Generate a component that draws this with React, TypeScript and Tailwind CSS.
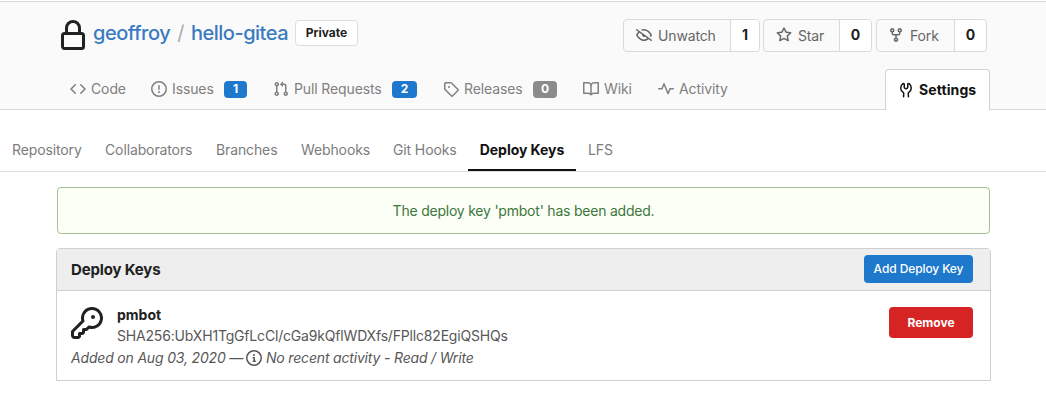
import type { ReactNode } from "react";

const paths = {
  lock: "M4 4v2h-.25A1.75 1.75 0 002 7.75v5.5c0 .966.784 1.75 1.75 1.75h8.5A1.75 1.75 0 0014 13.25v-5.5A1.75 1.75 0 0012.25 6H12V4a4 4 0 10-8 0zm6.5 2V4a2.5 2.5 0 10-5 0v2h5zM12 7.5h.25a.25.25 0 01.25.25v5.5a.25.25 0 01-.25.25h-8.5a.25.25 0 01-.25-.25v-5.5a.25.25 0 01.25-.25H12z",
  code: "M4.72 3.22a.75.75 0 011.06 1.06L2.06 8l3.72 3.72a.75.75 0 11-1.06 1.06L.47 8.53a.75.75 0 010-1.06l4.25-4.25zm6.56 0a.75.75 0 10-1.06 1.06L13.94 8l-3.72 3.72a.75.75 0 101.06 1.06l4.25-4.25a.75.75 0 000-1.06l-4.25-4.25z",
  issue: "M8 1.5a6.5 6.5 0 100 13 6.5 6.5 0 000-13zM0 8a8 8 0 1116 0A8 8 0 010 8zm9 3a1 1 0 11-2 0 1 1 0 012 0zm-.25-6.25a.75.75 0 00-1.5 0v3.5a.75.75 0 001.5 0v-3.5z",
  pull: "M7.177 3.073L9.573.677A.25.25 0 0110 .854v4.792a.25.25 0 01-.427.177L7.177 3.427a.25.25 0 010-.354zM3.75 2.5a.75.75 0 100 1.5.75.75 0 000-1.5zm-2.25.75a2.25 2.25 0 113 2.122v5.256a2.251 2.251 0 11-1.5 0V5.372A2.25 2.25 0 011.5 3.25zM11 2.5h-1V4h1a1 1 0 011 1v5.628a2.251 2.251 0 101.5 0V5A2.5 2.5 0 0011 2.5zm1 10.25a.75.75 0 111.5 0 .75.75 0 01-1.5 0zM3.75 12a.75.75 0 100 1.5.75.75 0 000-1.5z",
  tag: "M2.5 7.775V2.75a.25.25 0 01.25-.25h5.025a.25.25 0 01.177.073l6.25 6.25a.25.25 0 010 .354l-5.025 5.025a.25.25 0 01-.354 0l-6.25-6.25a.25.25 0 01-.073-.177zm-1.5 0V2.75C1 1.784 1.784 1 2.75 1h5.025c.464 0 .91.184 1.238.513l6.25 6.25a1.75 1.75 0 010 2.474l-5.026 5.026a1.75 1.75 0 01-2.474 0l-6.25-6.25A1.75 1.75 0 011 7.775zM6 5a1 1 0 100 2 1 1 0 000-2z",
  book: "M0 1.75A.75.75 0 01.75 1h4.253c1.227 0 2.317.59 3 1.501A3.744 3.744 0 0111.006 1h4.245a.75.75 0 01.75.75v10.5a.75.75 0 01-.75.75h-4.507a2.25 2.25 0 00-1.591.659l-.622.621a.75.75 0 01-1.06 0l-.622-.621A2.25 2.25 0 005.258 13H.75a.75.75 0 01-.75-.75V1.75zm8.755 3a2.25 2.25 0 012.25-2.25H14.5v9h-3.757c-.71 0-1.4.201-1.992.572l.004-7.322zm-1.504 7.324l.004-5.073-.002-2.253A2.25 2.25 0 005.003 2.5H1.5v9h3.757a3.75 3.75 0 011.994.574z",
  pulse: "M6 2a.75.75 0 01.696.471L10 10.731l1.304-3.26A.75.75 0 0112 7h3.25a.75.75 0 010 1.5h-2.742l-1.812 4.528a.75.75 0 01-1.392 0L6 4.77 4.696 8.03A.75.75 0 014 8.5H.75a.75.75 0 010-1.5h2.742l1.812-4.529A.75.75 0 016 2z",
  tools: "M5.433 2.304A4.494 4.494 0 003.5 6c0 1.598.832 3.002 2.09 3.802.518.328.929.923.902 1.64v.008l-.164 3.337a.75.75 0 11-1.498-.073l.163-3.33c.002-.085-.05-.216-.207-.316A5.996 5.996 0 012 6a5.994 5.994 0 012.567-4.92 1.482 1.482 0 011.673-.04c.462.296.76.827.76 1.423v2.82c0 .082.041.16.11.206l.75.51a.25.25 0 00.28 0l.75-.51A.25.25 0 009 5.282V2.463c0-.596.298-1.127.76-1.423a1.482 1.482 0 011.673.04A5.994 5.994 0 0114 6a5.996 5.996 0 01-2.786 5.068c-.157.1-.209.23-.207.315l.163 3.33a.75.75 0 11-1.498.074l-.164-3.345c-.027-.717.384-1.312.902-1.64A4.496 4.496 0 0012.5 6a4.494 4.494 0 00-1.933-3.696c-.024.017-.067.067-.067.16v2.818a1.75 1.75 0 01-.767 1.448l-.75.51a1.75 1.75 0 01-1.966 0l-.75-.51A1.75 1.75 0 015.5 5.282V2.463c0-.092-.043-.142-.067-.159z",
  eyeClosed: "M.143 2.31a.75.75 0 011.047-.167l14.5 10.5a.75.75 0 11-.88 1.214l-2.248-1.628C11.346 13.19 9.792 14 8 14c-1.981 0-3.67-.992-4.933-2.078C1.797 10.832.88 9.577.43 8.9a1.618 1.618 0 010-1.797c.353-.533.995-1.42 1.868-2.305L.31 3.357A.75.75 0 01.143 2.31zm3.386 3.378a14.21 14.21 0 00-1.85 2.244.12.12 0 00-.022.068c0 .021.006.045.022.068.412.621 1.242 1.75 2.366 2.717C5.175 11.758 6.527 12.5 8 12.5c1.195 0 2.31-.488 3.29-1.191L9.063 9.695A2 2 0 016.058 7.52l-2.53-1.832zM8 3.5c-.516 0-1.017.09-1.499.251a.75.75 0 11-.473-1.423A6.23 6.23 0 018 2c1.981 0 3.67.992 4.933 2.078 1.27 1.091 2.187 2.345 2.637 3.023a1.62 1.62 0 010 1.798c-.11.166-.248.365-.41.587a.75.75 0 11-1.21-.887c.148-.201.272-.382.371-.53a.119.119 0 000-.137c-.412-.621-1.242-1.75-2.366-2.717C10.825 4.242 9.473 3.5 8 3.5z",
  star: "M8 .25a.75.75 0 01.673.418l1.882 3.815 4.21.612a.75.75 0 01.416 1.279l-3.046 2.97.719 4.192a.75.75 0 01-1.088.791L8 12.347l-3.766 1.98a.75.75 0 01-1.088-.79l.72-4.194L.818 6.374a.75.75 0 01.416-1.28l4.21-.611L7.327.668A.75.75 0 018 .25zm0 2.445L6.615 5.5a.75.75 0 01-.564.41l-3.097.45 2.24 2.184a.75.75 0 01.216.664l-.528 3.084 2.769-1.456a.75.75 0 01.698 0l2.77 1.456-.53-3.084a.75.75 0 01.216-.664l2.24-2.183-3.096-.45a.75.75 0 01-.564-.41L8 2.694v.001z",
  fork: "M5 3.25a.75.75 0 11-1.5 0 .75.75 0 011.5 0zm0 2.122a2.25 2.25 0 10-1.5 0v.878A2.25 2.25 0 005.75 8.5h1.5v2.128a2.251 2.251 0 101.5 0V8.5h1.5a2.25 2.25 0 002.25-2.25v-.878a2.25 2.25 0 10-1.5 0v.878a.75.75 0 01-.75.75h-4.5A.75.75 0 015 6.25v-.878zm3.75 7.378a.75.75 0 11-1.5 0 .75.75 0 011.5 0zm3-8.75a.75.75 0 100-1.5.75.75 0 000 1.5z",
  key: "M6.5 5.5a4 4 0 112.731 3.795.75.75 0 00-.768.18L7.44 10.5H6.25a.75.75 0 00-.75.75v1.19l-.06.06H4.25a.75.75 0 00-.75.75v1.19l-.06.06H1.75a.25.25 0 01-.25-.25v-1.69l5.024-5.023a.75.75 0 00.181-.768A3.995 3.995 0 016.5 5.5zm4-5.5a5.5 5.5 0 00-5.348 6.788L.22 11.72a.75.75 0 00-.22.53v2C0 15.216.784 16 1.75 16h2a.75.75 0 00.53-.22l.5-.5a.75.75 0 00.22-.53V14h.75a.75.75 0 00.53-.22l.5-.5a.75.75 0 00.22-.53V12h.75a.75.75 0 00.53-.22l.932-.932A5.5 5.5 0 1010.5 0zm.5 6a1 1 0 100-2 1 1 0 000 2z",
  info: "M8 1.5a6.5 6.5 0 100 13 6.5 6.5 0 000-13zM0 8a8 8 0 1116 0A8 8 0 010 8zm6.5-.25A.75.75 0 017.25 7h1a.75.75 0 01.75.75v2.75h.25a.75.75 0 010 1.5h-2a.75.75 0 010-1.5h.25v-2h-.25a.75.75 0 01-.75-.75zM8 6a1 1 0 100-2 1 1 0 000 2z",
};

function Icon({ name, className = "size-4" }: { name: keyof typeof paths; className?: string }) {
  return (
    <svg viewBox="0 0 16 16" fill="currentColor" fillRule="evenodd" className={`shrink-0 ${className}`} aria-hidden="true">
      <path d={paths[name]} />
    </svg>
  );
}

function CountButton({ icon, label, count, left, right }: { icon: keyof typeof paths; label: string; count: number; left: string; right: string }) {
  return (
    <div className="flex h-[33px] rounded border border-[#d9d9da] text-sm">
      <button className={`flex items-center text-[#666] ${left}`}>
        <Icon name={icon} className="mb-0.5 size-4" />
        <span className="ml-1.5 tracking-[-0.15px]">{label}</span>
      </button>
      <span className={`flex items-center justify-center rounded-r border-l border-[#d9d9da] bg-white pb-px font-bold text-[#212121] ${right}`}>
        {count}
      </span>
    </div>
  );
}

function Tab({ icon, label, width, badge }: { icon: keyof typeof paths; label: string; width: string; badge?: ReactNode }) {
  return (
    <a className={`flex shrink-0 items-center tracking-[-0.12px] ${width}`}>
      <Icon name={icon} />
      <span className="ml-[5px]">{label}</span>
      {badge}
    </a>
  );
}

const badge = "ml-auto flex h-[17px] items-center justify-center rounded text-xs font-bold text-white";

export default function App() {
  return (
    <div className="h-[419px] overflow-hidden bg-white font-['Inter',sans-serif] text-sm text-[#212121]">
      <header className="mt-px flex h-[109px] flex-col border-y border-[#d8d9da] bg-[#fafafa]">
        <div className="flex h-[52px] items-start pl-[57px] pr-[59px] pt-[17px]">
          <Icon name="lock" className="mt-px size-8" />
          <div className="ml-1 flex h-7 items-center text-xl tracking-[-0.5px] text-[#3a7ac0]">
            <a className="w-[77px] font-medium">geoffroy</a>
            <span className="w-[21px] text-center text-[#aaa]">/</span>
            <a className="w-[98px] font-medium">hello-gitea</a>
          </div>
          <span className="ml-1.5 mt-px flex h-[26px] w-[63px] items-center justify-center rounded border border-[#dededf] bg-white text-xs font-bold">
            Private
          </span>
          <div className="ml-auto flex">
            <CountButton icon="eyeClosed" label="Unwatch" count={1} left="w-[106px] pl-3" right="w-[29px]" />
            <div className="w-[3px]" />
            <CountButton icon="star" label="Star" count={0} left="w-[75px] pl-3" right="w-8" />
            <div className="w-1" />
            <CountButton icon="fork" label="Fork" count={0} left="w-[77px] pl-[11px]" right="w-8" />
          </div>
        </div>
        <nav className="flex h-[55px] pl-[70px] pr-14 text-[#808080]">
          <div className="mt-[25px] flex h-5 items-center">
            <Tab icon="code" label="Code" width="mr-[25px] w-14" />
            <Tab icon="issue" label="Issues" width="mr-[26px] w-24" badge={<span className={`${badge} w-[23px] bg-[#1e78cc]`}>1</span>} />
            <Tab icon="pull" label="Pull Requests" width="mr-[26px] w-36" badge={<span className={`${badge} w-[25px] bg-[#1e78cc]`}>2</span>} />
            <Tab icon="tag" label="Releases" width="mr-[26px] w-[114px]" badge={<span className={`${badge} w-[24px] bg-[#8b8b8b]`}>0</span>} />
            <Tab icon="book" label="Wiki" width="w-[75px]" />
            <Tab icon="pulse" label="Activity" width="w-[75px]" />
          </div>
          <a className="-mb-px ml-auto mt-[15px] flex h-[41px] w-[105px] items-center rounded-t border border-b-0 border-[#d2d2d3] bg-white pl-3 font-bold text-[#111]">
            <Icon name="tools" />
            <span className="mb-px ml-[5px] tracking-[0.1px]">Settings</span>
          </a>
        </nav>
      </header>

      <nav className="flex h-[62px] border-b border-[#dcdddd] tracking-[-0.12px] text-[#7c7c7c]">
        <a className="ml-3 mt-[30px] w-[93px]">Repository</a>
        <a className="mt-[30px] w-[111px]">Collaborators</a>
        <a className="mt-[30px] w-[85px]">Branches</a>
        <a className="mt-[30px] w-[92px]">Webhooks</a>
        <a className="mt-[30px] w-[75px]">Git Hooks</a>
        <a className="flex h-[61px] w-[108px] justify-center border-b-2 border-[#111] pt-[30px] font-bold tracking-[-0.05px] text-[#111]">Deploy Keys</a>
        <a className="ml-3 mt-[30px]">LFS</a>
      </nav>

      <main className="px-14">
        <div className="ml-px mt-[15px] flex h-[47px] items-center justify-center rounded border border-[#a3c293] bg-[#fcfff5] tracking-[-0.22px] text-[#3c763d]">
          The deploy key 'pmbot' has been added.
        </div>
        <section className="-mr-px mt-3.5 h-[133px] rounded-t border border-[#cfcfd0] bg-white">
          <div className="flex h-[42px] items-center justify-between border-b border-[#cfcfd0] bg-[#eee] pl-3.5 pr-[17px]">
            <h2 className="text-[15px] font-bold tracking-[-0.15px]">Deploy Keys</h2>
            <button className="mb-px h-7 w-[109px] rounded bg-[#1e78cc] text-xs font-medium tracking-[-0.1px] text-white">Add Deploy Key</button>
          </div>
          <div className="flex pl-3.5 pr-[17px] pt-4">
            <Icon name="key" className="size-8" />
            <div className="-mt-0.5 ml-3.5">
              <div className="h-[21px] font-bold leading-5">pmbot</div>
              <div className="leading-5 tracking-[-0.18px] text-[#575757]">SHA256:UbXH1TgGfLcCl/cGa9kQflWDXfs/FPllc82EgiQSHQs</div>
            </div>
            <button className="ml-auto h-[31px] w-[84px] rounded bg-[#d62424] text-xs font-bold text-white">Remove</button>
          </div>
          <div className="mt-0.5 flex h-5 items-center whitespace-pre pl-3.5 italic tracking-[-0.18px] text-[#575757]">
            <span className="w-[175px]">Added on Aug 03, 2020 —</span>
            <Icon name="info" />
            <span className="ml-1">No recent activity - Read / Write</span>
          </div>
        </section>
      </main>
    </div>
  );
}
